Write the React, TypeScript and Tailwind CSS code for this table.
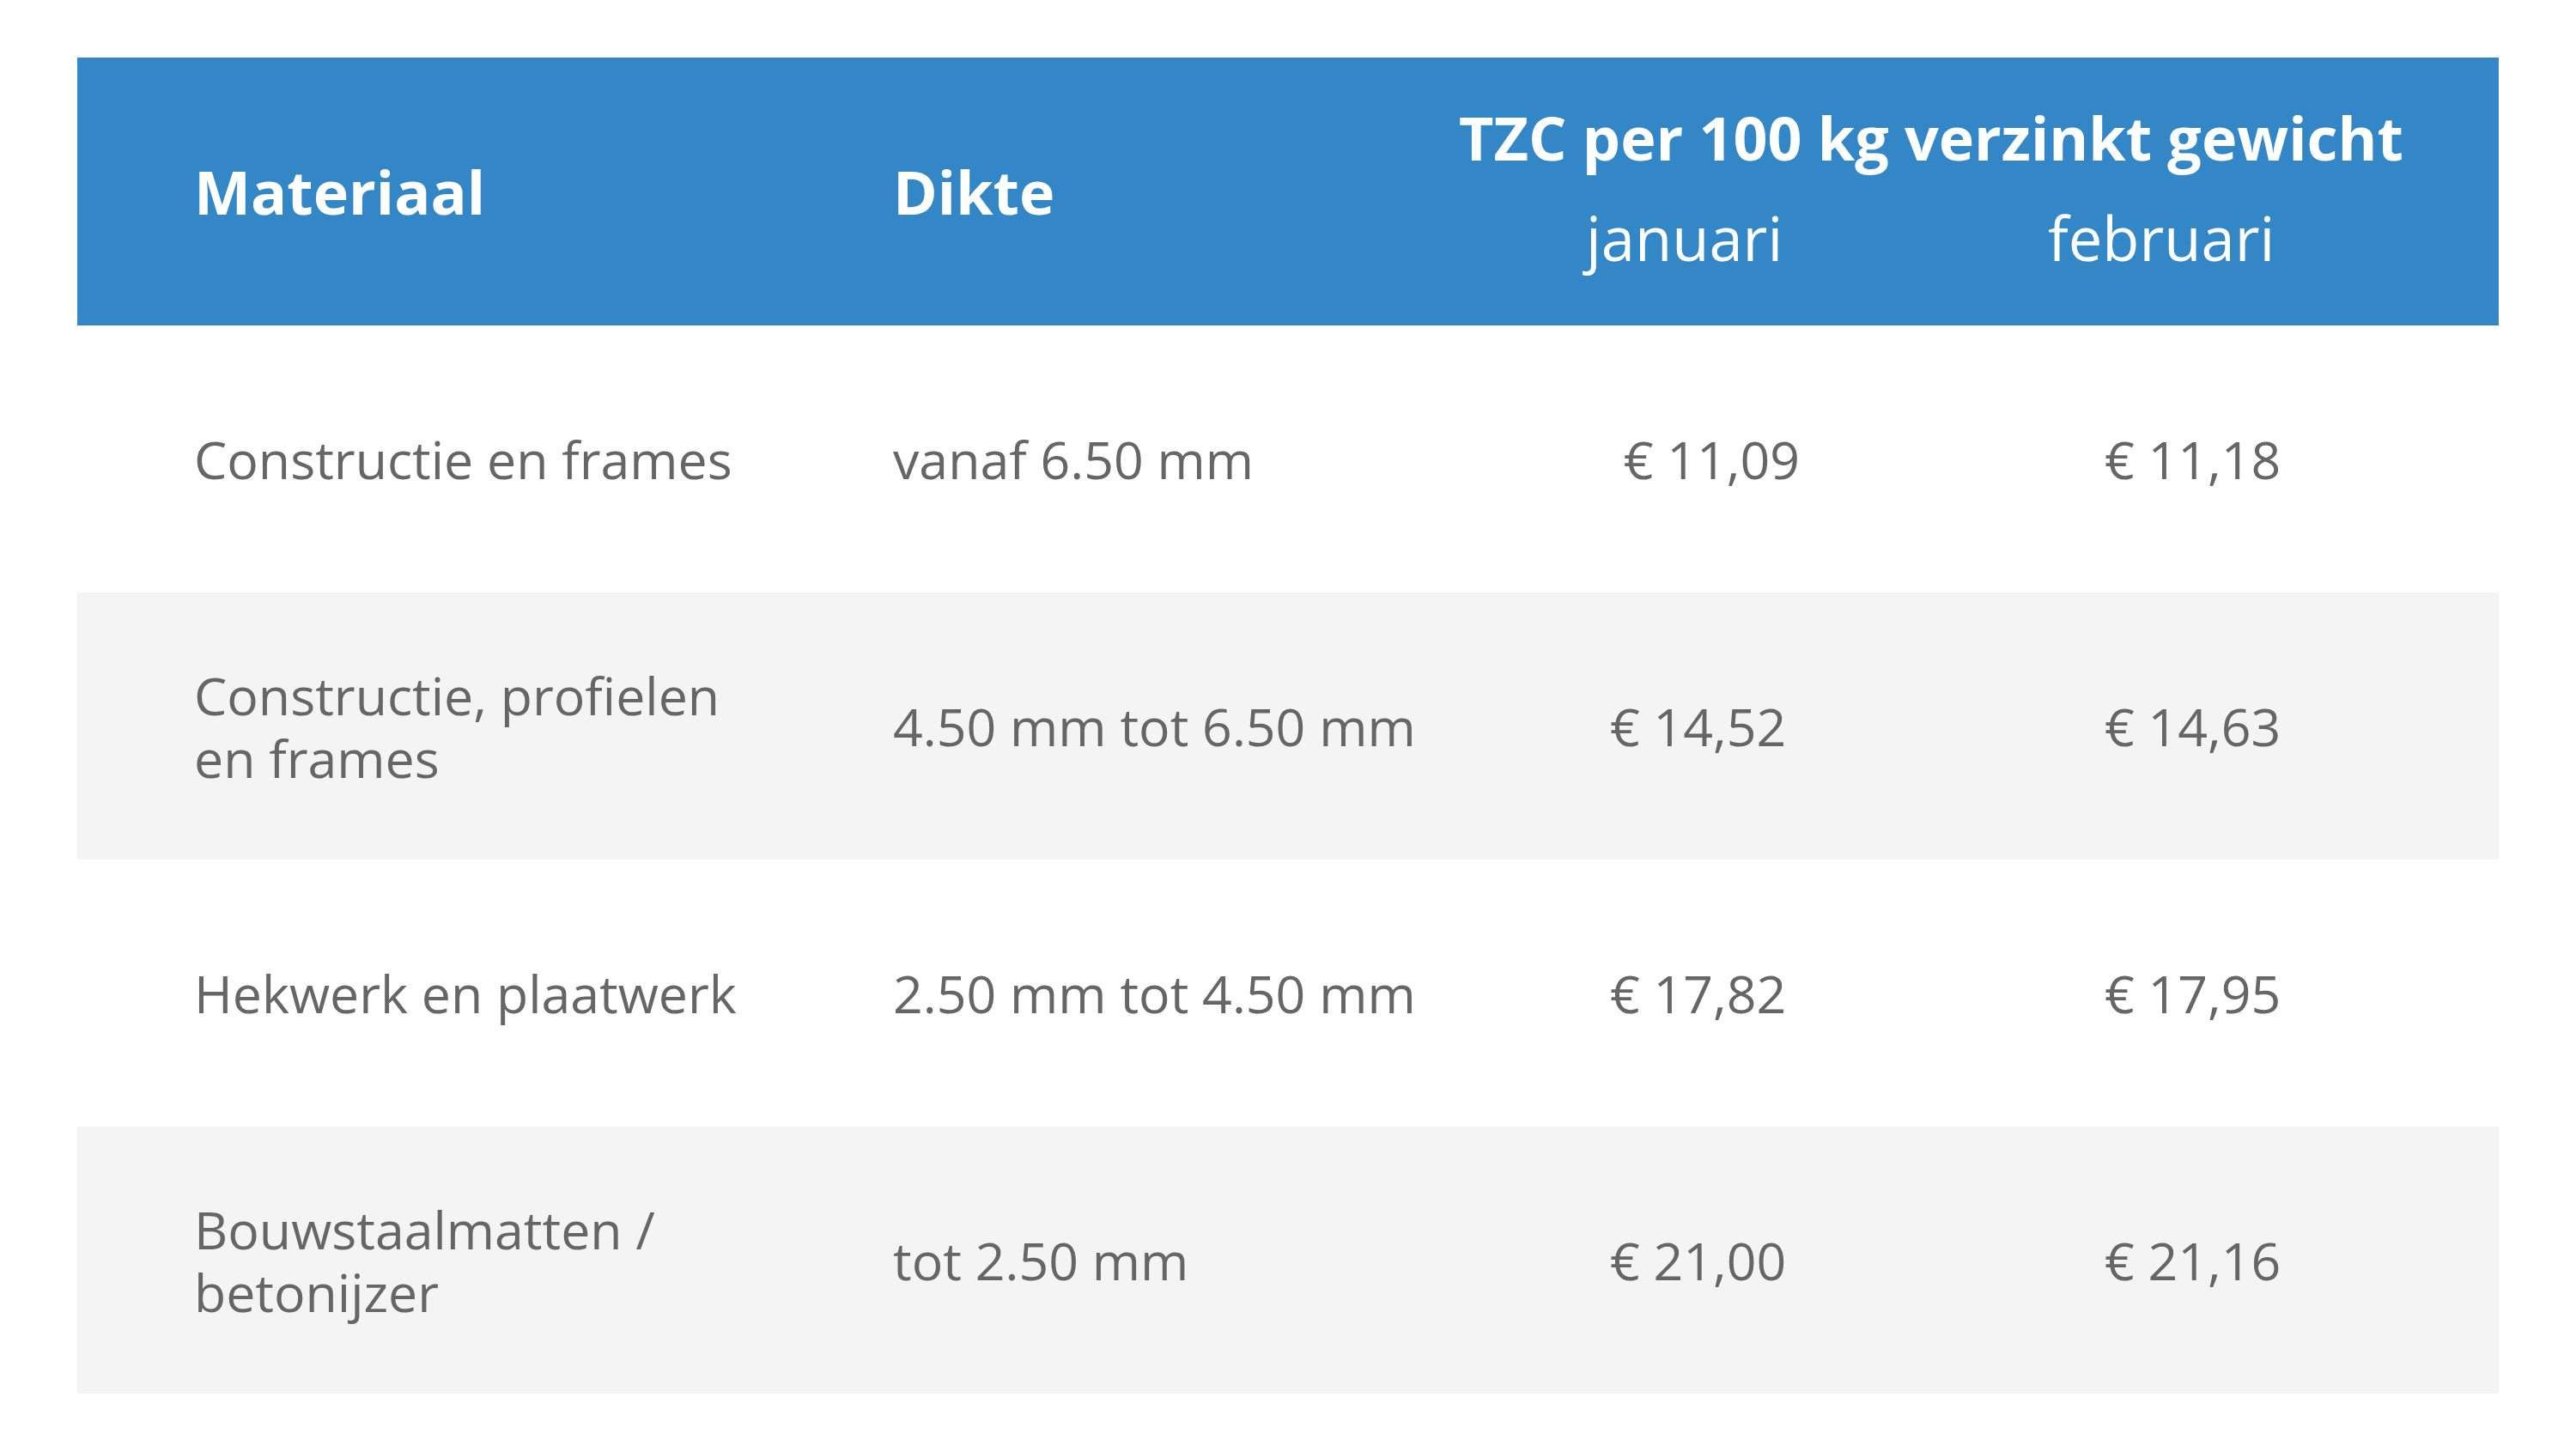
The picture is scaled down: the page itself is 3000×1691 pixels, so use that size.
import React from "react";

const rows: { mat: string[]; dikte: string; jan: string; feb: string; grey: boolean }[] = [
  { mat: ["Constructie en frames"], dikte: "vanaf 6.50 mm", jan: "\u00a0€ 11,09", feb: "€ 11,18", grey: false },
  { mat: ["Constructie, profielen", "en frames"], dikte: "4.50 mm tot 6.50 mm", jan: "€ 14,52", feb: "€ 14,63", grey: true },
  { mat: ["Hekwerk en plaatwerk"], dikte: "2.50 mm tot 4.50 mm", jan: "€ 17,82", feb: "€ 17,95", grey: false },
  { mat: ["Bouwstaalmatten /", "betonijzer"], dikte: "tot 2.50 mm", jan: "€ 21,00", feb: "€ 21,16", grey: true },
];

export default function App() {
  return (
    <div
      className="w-[3000px] h-[1691px] bg-white pt-[67px] pl-[90px]"
      style={{ fontFamily: '"Open Sans", "Noto Sans", sans-serif' }}
    >
      <div className="w-[2820px]">
        {/* header */}
        <div className="flex h-[312px] bg-[#3487c6] text-white">
          <div className="w-[813px] pl-[136px] flex items-center text-[70px] font-bold leading-[84px]">
            Materiaal
          </div>
          <div className="w-[796px] pl-[137px] flex items-center text-[70px] font-bold leading-[84px]">
            Dikte
          </div>
          <div className="flex-1 pt-[51px] flex flex-col">
            <div className="text-[70px] font-bold leading-[84px] whitespace-nowrap">
              TZC per 100 kg verzinkt gewicht
            </div>
            <div className="flex pl-[148px] mt-[33px] text-[70.5px] font-normal leading-[84px]">
              <div className="w-[538px]">januari</div>
              <div>februari</div>
            </div>
          </div>
        </div>
        {/* body */}
        {rows.map((r, i) => (
          <div
            key={i}
            className={`grid grid-cols-[813px_835px_576px_1fr] h-[311px] text-[60.8px] leading-[73px] text-[#666666] ${
              r.grey ? "bg-[#f4f4f4]" : "bg-white"
            }`}
          >
            <div className="pl-[136px] flex items-center whitespace-nowrap">
              <div className="flex flex-col">
                {r.mat.map((m, j) => (
                  <span key={j}>{m}</span>
                ))}
              </div>
            </div>
            <div className="pl-[137px] flex items-center whitespace-nowrap">{r.dikte}</div>
            <div className="pl-[137px] flex items-center whitespace-pre">{r.jan}</div>
            <div className="pl-[137px] flex items-center whitespace-nowrap">{r.feb}</div>
          </div>
        ))}
      </div>
    </div>
  );
}
